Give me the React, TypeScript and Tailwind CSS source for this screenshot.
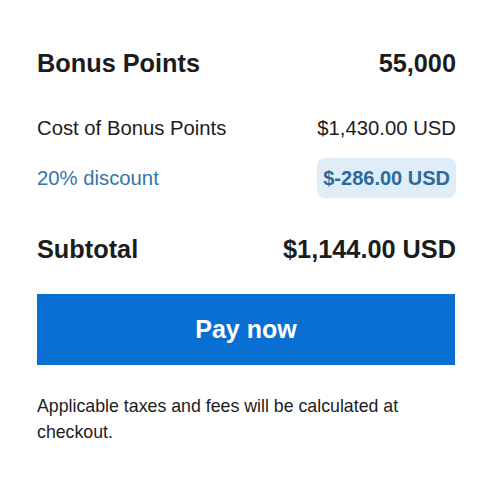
export default function App() {
  return (
    <div className="min-h-[478px] w-[486px] bg-white font-['Liberation_Sans',Arial,sans-serif] text-[#1c1c1c]">
      <div className="ml-[37px] flex w-[419px] flex-col pt-[48px]">
        <div className="flex items-center justify-between text-[25.3px] font-bold leading-[30px]">
          <span>Bonus Points</span>
          <span>55,000</span>
        </div>

        <div className="mt-[38px] flex items-center justify-between text-[20.3px] leading-[24px]">
          <span>Cost of Bonus Points</span>
          <span>$1,430.00 USD</span>
        </div>

        <div className="mt-[18px] flex items-center justify-between">
          <span className="text-[20.3px] leading-[24px] text-[#3376a8]">20% discount</span>
          <span className="flex h-[40px] items-center rounded-[8px] bg-[#deedf8] px-[6px] text-[20px] font-bold text-[#2d6a9b]">
            $-286.00 USD
          </span>
        </div>

        <div className="mt-[36px] flex items-center justify-between text-[25.3px] font-bold leading-[30px]">
          <span>Subtotal</span>
          <span>$1,144.00 USD</span>
        </div>

        <button className="mt-[30px] flex h-[71px] w-[418px] items-center justify-center bg-[#0a6fd3] text-[25px] font-bold text-white">
          Pay now
        </button>

        <p className="mt-[28px] text-[17.75px] leading-[26px]">
          Applicable taxes and fees will be calculated at checkout.
        </p>
      </div>
    </div>
  );
}
